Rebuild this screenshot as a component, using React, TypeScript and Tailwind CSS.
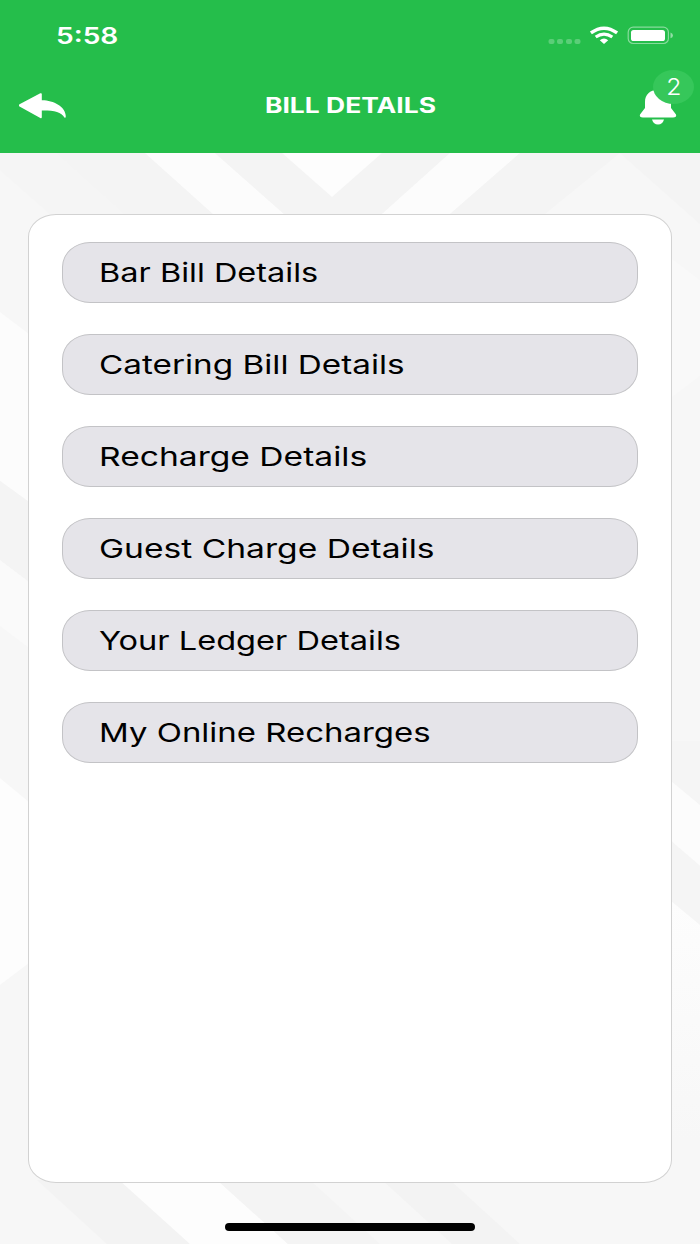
import React from "react";

const menuItems = [
  { label: "Bar Bill Details", scale: "scale-x-[1.25]" },
  { label: "Catering Bill Details", scale: "scale-x-[1.28]" },
  { label: "Recharge Details", scale: "scale-x-[1.292]" },
  { label: "Guest Charge Details", scale: "scale-x-[1.292]" },
  { label: "Your Ledger Details", scale: "scale-x-[1.252]" },
  { label: "My Online Recharges", scale: "scale-x-[1.267]" },
];

const StatusIcons: React.FC = () => (
  <svg width="126" height="20" viewBox="548 25 126 20" fill="none">
    <g fill="#fff" fillOpacity="0.25">
      <rect x="548.5" y="39" width="6" height="5" rx="2" />
      <rect x="557" y="39" width="6" height="5" rx="2" />
      <rect x="566" y="39" width="6" height="5" rx="2" />
      <rect x="574.5" y="39" width="6" height="5" rx="2" />
    </g>
    {/* wifi */}
    <path d="M590.9 32.9Q604 23.4 617.1 32.9" stroke="#fff" strokeWidth="3.4" />
    <path d="M595.7 37Q604 31.2 612.3 37" stroke="#fff" strokeWidth="3.2" />
    <path d="M599.8 40.3Q604 36.6 608.2 40.3L604 43.9Z" fill="#fff" />
    {/* battery */}
    <rect
      x="628.2"
      y="27.2"
      width="40.2"
      height="16.3"
      rx="5"
      stroke="#fff"
      strokeOpacity="0.45"
      strokeWidth="1.2"
    />
    <rect x="631" y="30" width="34" height="11" rx="2.6" fill="#fff" />
    <path
      d="M670.5 32.5Q673 33.5 673 35.4Q673 37.3 670.5 38.3Z"
      fill="#fff"
      fillOpacity="0.5"
    />
  </svg>
);

const Backdrop: React.FC = () => (
  <svg
    className="absolute inset-0"
    width="700"
    height="1244"
    viewBox="0 0 700 1244"
  >
    <defs>
      <linearGradient id="fade" x1="0" y1="0" x2="0" y2="1">
        <stop offset="0" stopColor="#fdfdfd" />
        <stop offset="1" stopColor="#f7f7f7" />
      </linearGradient>
    </defs>
    <rect width="700" height="1244" fill="#f7f7f7" />

    {/* top chevrons */}
    <path d="M0 153H57L125 214H50L0 170Z" fill="#f5f5f5" />
    <path d="M57 153H145L213 214H125Z" fill="#f4f4f4" />
    <path d="M145 153H215L284 214H213Z" fill="#fcfcfc" />
    <path d="M215 153H450L382 214H284Z" fill="#f4f4f4" />
    <path d="M282 153H382L332 197Z" fill="#fdfdfd" />
    <path d="M450 153H520L450 214H382Z" fill="#fcfcfc" />
    <path d="M520 153H620L545 214H450Z" fill="#f4f4f4" />
    <path d="M620 153H700V224Z" fill="#f4f4f4" />

    {/* left edge */}
    <path d="M0 312L29 334V502L0 481Z" fill="#fcfcfc" />
    <path d="M0 481L29 502V582L0 560Z" fill="#f4f4f4" />
    <path d="M0 560L29 582V648L0 626Z" fill="#fafafa" />
    <path d="M0 778L29 802V963L0 985Z" fill="#fdfdfd" />

    {/* right edge */}
    <path d="M671 258L700 280V376L671 398Z" fill="#f9f9f9" />
    <path d="M671 741H700V805L671 781Z" fill="#f5f5f5" />
    <path d="M671 781L700 805V866L671 841Z" fill="#fcfcfc" />
    <path d="M671 841L700 866V925L671 901Z" fill="#f5f5f5" />
    <path d="M671 901L700 925V1140H671Z" fill="url(#fade)" />

    {/* bottom stripes */}
    <path d="M37 1180H122L190 1244H107Z" fill="#f3f3f3" />
    <path d="M119 1180H217L288 1244H190Z" fill="#fdfdfd" />
    <path d="M217 1180H310L380 1244H288Z" fill="#f4f4f4" />
    <path d="M382 1180H450L520 1244H452Z" fill="#f3f3f3" />
  </svg>
);

export default function App() {
  return (
    <div className="relative flex h-[1244px] w-[700px] flex-col overflow-hidden font-['Inter',sans-serif]">
      <Backdrop />

      <header className="relative h-[153px] bg-[#25be4b] text-white">
        <div className="flex h-[70px] items-center justify-between pr-[26px] pl-[56px]">
          <span className="mt-[2px] origin-left scale-x-[1.25] text-[22.5px] font-semibold">
            5:58
          </span>
          <StatusIcons />
        </div>
        <div className="grid h-[70px] grid-cols-[56px_1fr_56px] items-center pr-[6px] pl-[7px]">
          <button aria-label="Back" className="pl-[12px]">
            <svg
              className="block"
              width="47"
              height="26"
              viewBox="0 0 47 26"
              fill="#fff"
            >
              <path d="M0.5 11.3L21.3 0.3Q22.8 -0.2 22.8 1V7.2C34 7 46.8 13.5 46.8 23.3Q46.7 25.5 45.4 24.5C42.5 19 34.5 17.3 22.8 17.5V24Q22.8 25.7 21.3 25L0.5 13.5Q-0.8 12.5 0.5 11.3Z" />
            </svg>
          </button>
          <h1 className="scale-x-[1.26] text-center text-[21px] font-bold">
            BILL DETAILS
          </h1>
          <button
            aria-label="Notifications"
            className="relative mb-[16px] h-[56px] w-[56px]"
          >
            <svg
              className="block"
              width="56"
              height="56"
              viewBox="638 70 56 56"
              fill="#fff"
            >
              <path d="M645 102C645 94.5 650 90 657.5 90C665 90 671 94.5 671 102V108L676 114.5Q677 117.5 673 117.5H643Q639 117.5 640 114.5L645 108Z" />
              <path d="M652 119.6H664Q662.5 124.6 658 124.6Q653.5 124.6 652 119.6Z" />
            </svg>
            <span className="absolute top-0 left-[15px] flex h-[34px] w-[41px] items-center justify-center rounded-[50%] bg-[#36c75a]">
              <span className="scale-x-[1.1] text-[22.5px] leading-none font-light">
                2
              </span>
            </span>
          </button>
        </div>
      </header>

      <main className="relative mx-[28px] mt-[61px] flex h-[969px] flex-col gap-[31px] rounded-[28px/23px] border border-[#d2d2d2] bg-white px-[33px] pt-[27px]">
        {menuItems.map((item) => (
          <button
            key={item.label}
            className="flex h-[61px] shrink-0 items-center rounded-[28px/25px] border border-[#c3c3c6] bg-[#e5e4e9] pl-[36px] text-left"
          >
            <span
              className={`block h-[33px] origin-left overflow-hidden text-[26px] leading-[34px] font-[370] whitespace-nowrap text-black ${item.scale}`}
            >
              {item.label}
            </span>
          </button>
        ))}
      </main>

      <div className="relative mx-auto mt-[40px] h-[8px] w-[250px] rounded-full bg-black" />
    </div>
  );
}
